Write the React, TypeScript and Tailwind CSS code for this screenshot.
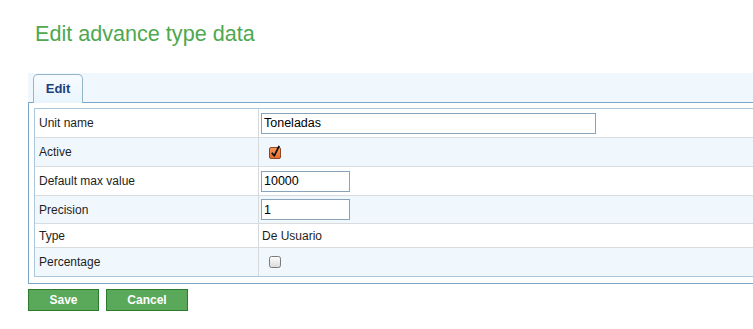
import type { ReactNode } from 'react';

function CheckBox({ checked }: { checked?: boolean }) {
  if (checked) {
    return (
      <svg width="13" height="14" viewBox="0 0 13 14" className="ml-[8px] -mt-[1px]">
        <defs>
          <linearGradient id="cbOn" x1="0" y1="0" x2="0" y2="1">
            <stop offset="0" stopColor="#f79a5e" />
            <stop offset="1" stopColor="#e9692a" />
          </linearGradient>
        </defs>
        <rect x="0.5" y="2.5" width="11" height="11" rx="1.5" fill="url(#cbOn)" stroke="#8c4a22" />
        <path d="M2.8 7.8 L5.2 10.8 L10.2 0.8" fill="none" stroke="#111" strokeWidth="1.8" strokeLinejoin="round" />
      </svg>
    );
  }
  return (
    <svg width="13" height="13" viewBox="0 0 13 13" className="ml-[8px]">
      <defs>
        <linearGradient id="cbOff" x1="0" y1="0" x2="0" y2="1">
          <stop offset="0" stopColor="#fdfdfd" />
          <stop offset="1" stopColor="#d9d9d9" />
        </linearGradient>
      </defs>
      <rect x="0.5" y="0.5" width="11" height="11" rx="2" fill="url(#cbOff)" stroke="#7a7a7a" />
    </svg>
  );
}

function Row({
  label,
  height,
  alt,
  last,
  children,
}: {
  label: string;
  height: string;
  alt?: boolean;
  last?: boolean;
  children: ReactNode;
}) {
  return (
    <div
      className={`flex ${height} ${alt ? 'bg-[#f0f8fe]' : 'bg-white'} ${last ? '' : 'border-b border-[#d9dcde]'}`}
    >
      <div className="flex w-[224px] shrink-0 items-center border-r border-[#d6d9dc] pl-[4px] text-[12px] text-[#1e1e1e]">
        {label}
      </div>
      <div className="flex flex-1 items-center pl-[2px] text-[12px] text-[#1e1e1e]">{children}</div>
    </div>
  );
}

function TextInput({ value, width }: { value: string; width: string }) {
  return (
    <input
      readOnly
      value={value}
      className={`${width} h-[21px] border border-[#88a4bd] bg-white px-[2px] text-[12.5px] text-black outline-none`}
    />
  );
}

export default function App() {
  return (
    <div className="h-[329px] w-[753px] overflow-hidden bg-white font-['Liberation_Sans',Arial,sans-serif]">
      <h1 className="pl-[35px] pt-[21px] text-[21.6px] leading-[25px] font-normal text-[#4fa84f]">
        Edit advance type data
      </h1>

      <div className="ml-[28px] mt-[27px] w-[760px]">
        <div className="flex h-[30px] items-end border-b border-[#7ea7c7] bg-[#f0f8fd] pl-[5px]">
          <div className="-mb-px flex h-[29px] w-[50px] items-center justify-center rounded-t-[5px] border border-b-0 border-[#93b4cd] bg-gradient-to-b from-[#f7fbfe] to-[#e9f5fd] text-[13px] font-bold text-[#1c3f7c]">
            Edit
          </div>
        </div>

        <div className="border-b border-l border-[#7ea7c7] bg-white pt-[5px] pb-[6px] pl-[5px]">
          <div className="border border-[#a9c7de]">
            <Row label="Unit name" height="h-[29px]">
              <TextInput value="Toneladas" width="w-[335px]" />
            </Row>
            <Row label="Active" height="h-[29px]" alt>
              <CheckBox checked />
            </Row>
            <Row label="Default max value" height="h-[29px]">
              <TextInput value="10000" width="w-[89px]" />
            </Row>
            <Row label="Precision" height="h-[28px]" alt>
              <TextInput value="1" width="w-[89px]" />
            </Row>
            <Row label="Type" height="h-[24px]">
              <span className="pl-[1px]">De Usuario</span>
            </Row>
            <Row label="Percentage" height="h-[28px]" alt last>
              <CheckBox />
            </Row>
          </div>
        </div>
      </div>

      <div className="ml-[28px] mt-[5px] flex gap-[7px]">
        <button className="h-[22px] w-[71px] border border-[#2c7a2c] bg-[#5aa85a] text-[12px] font-bold text-white">
          Save
        </button>
        <button className="h-[22px] w-[82px] border border-[#2c7a2c] bg-[#5aa85a] text-[12px] font-bold text-white">
          Cancel
        </button>
      </div>
    </div>
  );
}
